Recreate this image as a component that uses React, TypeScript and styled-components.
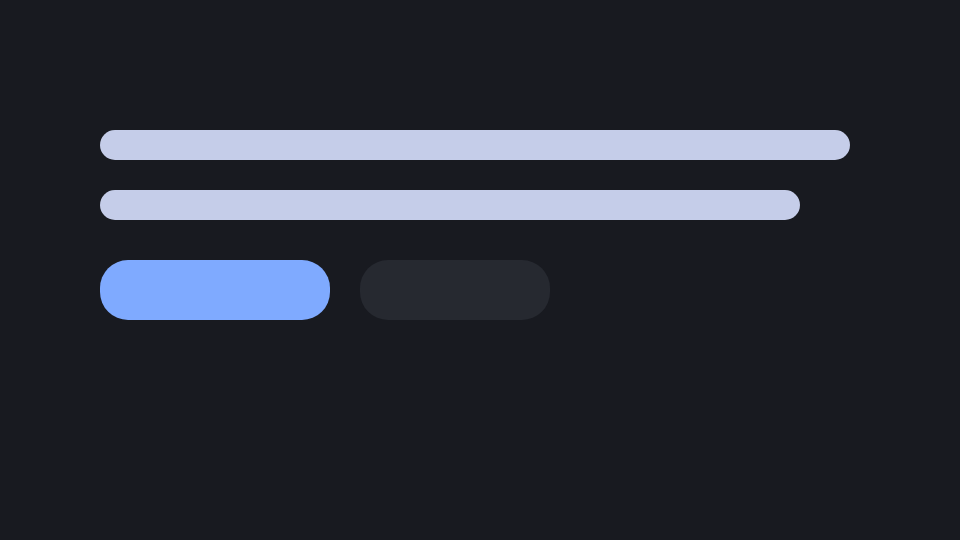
import styled, { createGlobalStyle } from "styled-components";

const GlobalStyle = createGlobalStyle`
  html, body {
    margin: 0;
    padding: 0;
    background: #181a20;
    font-family: "Inter", "Liberation Sans", sans-serif;
  }
`;

const Page = styled.div`
  width: 960px;
  height: 540px;
  box-sizing: border-box;
  padding: 130px 100px 0;
  background: #181a20;
  display: flex;
  flex-direction: column;
`;

const Line = styled.div<{ $width: number }>`
  width: ${(props) => props.$width}px;
  height: 30px;
  border-radius: 15px;
  background: #c5cde9;
  & + & {
    margin-top: 30px;
  }
`;

const Actions = styled.div`
  display: flex;
  gap: 30px;
  margin-top: 40px;
`;

const Button = styled.div<{ $primary?: boolean; $width: number }>`
  width: ${(props) => props.$width}px;
  height: 60px;
  border-radius: 28px;
  background: ${(props) => (props.$primary ? "#7faaff" : "#262930")};
`;

const App: React.FC = () => {
  return (
    <>
      <GlobalStyle />
      <Page>
        <Line $width={750} />
        <Line $width={700} />
        <Actions>
          <Button $primary $width={230} />
          <Button $width={190} />
        </Actions>
      </Page>
    </>
  );
};

export default App;
